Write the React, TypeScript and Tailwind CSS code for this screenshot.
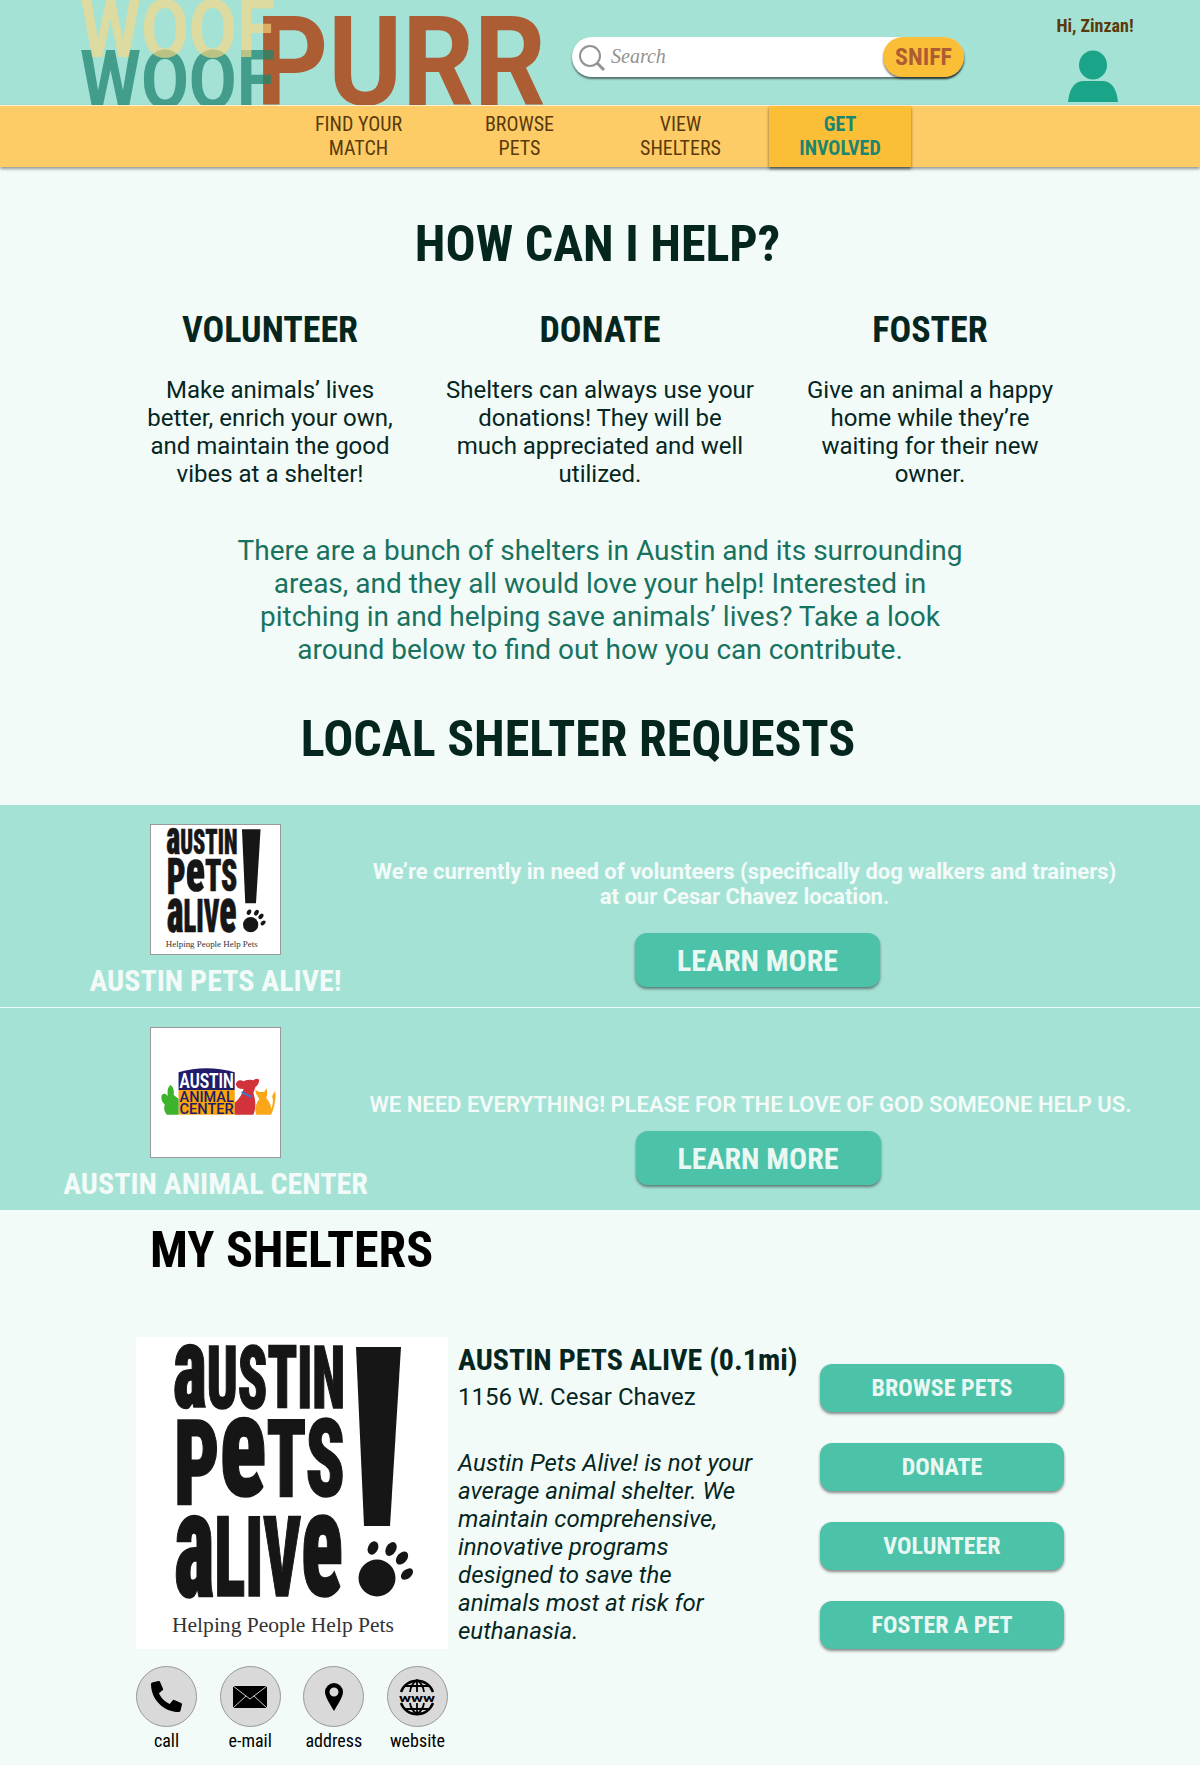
import React from "react";
import { FaPhoneAlt } from "react-icons/fa";

const cond = "[font-stretch:75%]";

const navItems = [
  ["FIND YOUR", "MATCH"],
  ["BROWSE", "PETS"],
  ["VIEW", "SHELTERS"],
];

const ways = [
  {
    title: "VOLUNTEER",
    lines: ["Make animals’ lives", "better, enrich your own,", "and maintain the good", "vibes at a shelter!"],
  },
  {
    title: "DONATE",
    lines: ["Shelters can always use your", "donations! They will be", "much appreciated and well", "utilized."],
  },
  {
    title: "FOSTER",
    lines: ["Give an animal a happy", "home while they’re", "waiting for their new", "owner."],
  },
];

const Logo: React.FC = () => (
  <svg width="464" height="105" viewBox="0 0 464 105" className="shrink-0 overflow-hidden">
    <g fontFamily="Roboto, sans-serif" fontWeight="700">
      <text x="176" y="105" fontSize="124" fill="#AC5D33" textLength="290" lengthAdjust="spacingAndGlyphs">PURR</text>
      <text x="0" y="108" fontSize="82" fill="#1D856E" fillOpacity="0.73" textLength="195" lengthAdjust="spacingAndGlyphs">WOOF</text>
      <text x="0" y="57" fontSize="82" fill="#FBD781" fillOpacity="0.65" textLength="195" lengthAdjust="spacingAndGlyphs">WOOF</text>
    </g>
  </svg>
);

const ApaLogo: React.FC<{ className?: string }> = ({ className }) => (
  <svg viewBox="0 0 312 312" className={className}>
    <rect width="312" height="312" fill="#fff" />
    <g fontFamily="Roboto, sans-serif" fontWeight="900" fontStretch="75%" fill="#161616" stroke="#161616" strokeWidth="1.5">
      <text x="37" y="71" textLength="172" lengthAdjust="spacingAndGlyphs">
        <tspan fontSize="117">a</tspan>
        <tspan fontSize="87">USTIN</tspan>
      </text>
      <text x="38" y="159" textLength="171" lengthAdjust="spacingAndGlyphs">
        <tspan fontSize="119" dy="9">P</tspan>
        <tspan fontSize="144" dy="-9">e</tspan>
        <tspan fontSize="107">TS</tspan>
      </text>
      <text x="38" y="259" textLength="169" lengthAdjust="spacingAndGlyphs">
        <tspan fontSize="151">a</tspan>
        <tspan fontSize="112">LIV</tspan>
        <tspan fontSize="151">e</tspan>
      </text>
    </g>
    <polygon points="220,10 265,10 254,189 228,189" fill="#161616" />
    <circle cx="241" cy="241" r="18.5" fill="#161616" />
    <ellipse cx="237" cy="211" rx="5" ry="7" transform="rotate(25 237 211)" fill="#161616" />
    <ellipse cx="255" cy="212" rx="5" ry="7.5" transform="rotate(30 255 212)" fill="#161616" />
    <ellipse cx="266" cy="221" rx="5" ry="7.5" transform="rotate(40 266 221)" fill="#161616" />
    <ellipse cx="271" cy="237" rx="4.5" ry="7" transform="rotate(50 271 237)" fill="#161616" />
    <text x="36" y="295" fontFamily="'Liberation Serif', serif" fontSize="20" fill="#333" textLength="222" lengthAdjust="spacingAndGlyphs">Helping People Help Pets</text>
  </svg>
);

const AacLogo: React.FC<{ className?: string }> = ({ className }) => (
  <svg viewBox="0 0 131 131" className={className}>
    <rect width="131" height="131" fill="#fff" />
    <path d="M28 45 Q56 37 85 45 V63 H28 Z" fill="#211B6B" />
    <rect x="28" y="63" width="57" height="25" fill="#FBA308" />
    <text x="29" y="61" fontFamily="Roboto, sans-serif" fontWeight="700" fontSize="20" fill="#fff" textLength="55" lengthAdjust="spacingAndGlyphs">AUSTIN</text>
    <g fontFamily="Roboto, sans-serif" fontWeight="500" fontSize="14" fill="#211B6B">
      <text x="29" y="75" textLength="55" lengthAdjust="spacingAndGlyphs">ANIMAL</text>
      <text x="29" y="87" textLength="55" lengthAdjust="spacingAndGlyphs">CENTER</text>
    </g>
    <path d="M28 88 H16 Q12 83 14 78 Q9 73 11 68 Q14 65 17 69 Q16 60 20 58 Q24 61 23 68 Q26 70 28 72 Z" fill="#3DB22B" />
    <path d="M85 88 V76 Q92 70 94 62 Q87 62 86 57 Q88 51 94 54 Q99 52 104 53 Q108 50 110 53 Q109 58 106 60 L104 66 Q106 72 106 78 Q106 84 104 88 Z" fill="#D2323A" />
    <path d="M92 65 L102 70" stroke="#2E7FD0" strokeWidth="2" />
    <path d="M107 88 Q104 80 110 72 Q106 67 106 63 L110 65 L115 65 L117 61 Q119 67 117 71 Q122 77 122 82 Q125 76 123 69 L126 64 Q128 74 122 88 Z" fill="#FBA518" />
  </svg>
);

const MailIcon: React.FC = () => (
  <svg viewBox="0 0 34 22" className="w-[34px] h-[22px]">
    <rect width="34" height="22" fill="#000" />
    <path d="M0 0 L17 13 L34 0 M0 22 L13 10 M34 22 L21 10" stroke="#fff" strokeWidth="0.8" fill="none" />
  </svg>
);

const PinIcon: React.FC = () => (
  <svg viewBox="0 0 18 28" className="w-[18px] h-[28px]">
    <path fillRule="evenodd" d="M9 0 a9 9 0 0 1 9 9 c0 5 -5 12 -9 19 c-4 -7 -9 -14 -9 -19 a9 9 0 0 1 9 -9 Z M9 4.5 a4.5 4.5 0 1 0 0 9 a4.5 4.5 0 1 0 0 -9 Z" fill="#000" />
  </svg>
);

const WebIcon: React.FC = () => (
  <svg viewBox="0 0 38 38" className="w-[38px] h-[38px]" fill="none" stroke="#000" strokeWidth="2">
    <path d="M3 14 A17 17 0 0 1 35 14 M3 25 A17 17 0 0 0 35 25" strokeWidth="2.4" />
    <path d="M19 2 V14 M19 25 V36 M12 14 Q13 6 19 2 Q25 6 26 14 M12 25 Q13 32 19 36 Q25 32 26 25 M6 8 H32 M6 31 H32" strokeWidth="1.8" />
    <text x="19" y="23.5" textAnchor="middle" fontFamily="Roboto, sans-serif" fontWeight="700" fontSize="11" fill="#000" stroke="none" textLength="36" lengthAdjust="spacingAndGlyphs">www</text>
  </svg>
);

const contacts = [
  { label: "call", icon: <FaPhoneAlt className="w-[31px] h-[31px] text-black" /> },
  { label: "e-mail", icon: <MailIcon /> },
  { label: "address", icon: <PinIcon /> },
  { label: "website", icon: <WebIcon /> },
];

const blurb = [
  "Austin Pets Alive! is not your",
  "average animal shelter. We",
  "maintain comprehensive,",
  "innovative programs",
  "designed to save the",
  "animals most at risk for",
  "euthanasia.",
];

const shelterButtons = ["BROWSE PETS", "DONATE", "VOLUNTEER", "FOSTER A PET"];

const LearnMore: React.FC = () => (
  <button className={`w-[245px] h-[54px] rounded-xl bg-[#4CC3A8] text-[#EAF8F4] text-[30px] font-bold shadow-[0_2px_3px_rgba(0,0,0,0.45)] ${cond}`}>
    LEARN MORE
  </button>
);

const App: React.FC = () => {
  return (
    <div className="w-[1200px] h-[1765px] overflow-hidden bg-[#F3FBF8] font-['Roboto',sans-serif]">
      {/* Header */}
      <header className="h-[105px] bg-[#A5E2D6] flex pl-[80px]">
        <Logo />
        <div className="ml-[28px] mt-[37px] w-[392px] h-[40px] flex items-center justify-between bg-white rounded-full shadow-[0_2px_2px_rgba(0,0,0,0.5)]">
          <div className="flex items-center">
            <svg viewBox="0 0 28 28" className="w-[28px] h-[28px] ml-[6px] mt-[2px]" fill="none" stroke="#929292" strokeWidth="2">
              <circle cx="12" cy="12" r="10" />
              <path d="M19 19 L26 26" strokeWidth="3" />
            </svg>
            <span className="ml-[5px] mb-[3px] text-[20px] italic text-[#929292] font-['Liberation_Serif',serif]">Search</span>
          </div>
          <button className={`w-[81px] h-[40px] rounded-full bg-[#FBBF37] text-[#AC5D33] text-[24px] font-bold shadow-[0_2px_2px_rgba(0,0,0,0.5)] ${cond}`}>
            SNIFF
          </button>
        </div>
        <div className="ml-[81px] w-[100px] flex flex-col items-center">
          <span className={`mt-[15px] text-[18px] leading-[22px] font-bold text-[#5A3A0A] ${cond}`}>Hi, Zinzan!</span>
          <svg viewBox="0 0 50 52" className="w-[50px] h-[52px] mt-[13px] mr-[4px]" fill="#1BA588">
            <ellipse cx="25" cy="15" rx="14" ry="14.5" />
            <path d="M0 52 Q2 31 16 31 H34 Q48 31 50 52 Z" />
          </svg>
        </div>
      </header>

      {/* Nav */}
      <nav className="relative h-[62px] bg-[#FDCC67] border-t border-white/70 shadow-[0_2px_3px_rgba(0,0,0,0.4)] flex pl-[278px]">
        {navItems.map((item) => (
          <div key={item[0]} className={`w-[161px] pt-[6px] text-center text-[20px] leading-[24px] text-[#5A3A0A] ${cond}`}>
            {item[0]}
            <br />
            {item[1]}
          </div>
        ))}
        <div className={`ml-[8px] w-[142px] h-[61px] pt-[6px] text-center text-[20px] leading-[24px] font-bold text-[#1A8570] bg-[#FBBF37] shadow-[0_2px_3px_rgba(0,0,0,0.5)] ${cond}`}>
          GET
          <br />
          INVOLVED
        </div>
      </nav>

      {/* How can I help */}
      <section className="flex flex-col items-center">
        <h1 className={`mt-[48px] mr-[5px] text-[50px] leading-[58px] font-bold text-[#05261F] ${cond}`}>HOW CAN I HELP?</h1>
        <div className="mt-[36px] w-[990px] grid grid-cols-3 text-center">
          {ways.map((w) => (
            <div key={w.title}>
              <h2 className={`text-[36px] leading-[42px] font-bold text-[#05261F] ${cond}`}>{w.title}</h2>
              <p className="mt-[25px] text-[24px] leading-[28px] text-[#05261F]">
                {w.lines.map((l) => (
                  <span key={l} className="block">{l}</span>
                ))}
              </p>
            </div>
          ))}
        </div>
        <p className="mt-[46px] text-center text-[28px] leading-[33px] text-[#187260]">
          There are a bunch of shelters in Austin and its surrounding
          <br />
          areas, and they all would love your help! Interested in
          <br />
          pitching in and helping save animals’ lives? Take a look
          <br />
          around below to find out how you can contribute.
        </p>
        <h1 className={`mt-[44px] mr-[44px] text-[50px] leading-[58px] font-bold text-[#05261F] ${cond}`}>LOCAL SHELTER REQUESTS</h1>
      </section>

      {/* Requests */}
      <section className="mt-[37px] bg-[#A5E2D6]">
        <div className="h-[203px] flex border-b border-white/80">
          <div className="w-[431px] flex flex-col items-center pt-[19px]">
            <div className="w-[131px] h-[131px] border border-[#999]">
              <ApaLogo className="w-full h-full" />
            </div>
            <div className={`mt-[8px] text-[30px] leading-[36px] font-bold text-[#F3FBF8] ${cond}`}>AUSTIN PETS ALIVE!</div>
          </div>
          <div className="w-[627px] flex flex-col items-center pt-[54px]">
            <p className="text-center text-[22px] leading-[25px] font-bold text-[#F3FBF8] whitespace-nowrap">
              We’re currently in need of volunteers (specifically dog walkers and trainers)
              <br />
              at our Cesar Chavez location.
            </p>
            <div className="mt-[24px] ml-[26px]"><LearnMore /></div>
          </div>
        </div>
        <div className="h-[202px] flex">
          <div className="w-[431px] flex flex-col items-center pt-[19px]">
            <div className="w-[131px] h-[131px] border border-[#999]">
              <AacLogo className="w-full h-full" />
            </div>
            <div className={`mt-[8px] text-[30px] leading-[36px] font-bold text-[#F3FBF8] ${cond}`}>AUSTIN ANIMAL CENTER</div>
          </div>
          <div className="w-[627px] ml-[6px] flex flex-col items-center pt-[84px]">
            <p className="text-center text-[22px] leading-[25px] font-semibold text-[#F3FBF8] whitespace-nowrap">
              WE NEED EVERYTHING! PLEASE FOR THE LOVE OF GOD SOMEONE HELP US.
            </p>
            <div className="mt-[14px] ml-[15px]"><LearnMore /></div>
          </div>
        </div>
      </section>

      {/* My shelters */}
      <section className="pl-[136px]">
        <h1 className={`pl-[14px] pt-[11px] text-[50px] leading-[58px] font-bold text-black ${cond}`}>MY SHELTERS</h1>
        <div className="mt-[58px] flex">
          <div className="w-[312px]">
            <ApaLogo className="w-[312px] h-[312px]" />
            <div className="mt-[17px] flex justify-between">
              {contacts.map((c) => (
                <div key={c.label} className="w-[61px] flex flex-col items-center">
                  <div className="w-[61px] h-[61px] rounded-full bg-[#D9D9D9] border border-[#999] flex items-center justify-center">
                    {c.icon}
                  </div>
                  <span className={`mt-[4px] text-[18px] leading-[20px] text-black whitespace-nowrap ${cond}`}>{c.label}</span>
                </div>
              ))}
            </div>
          </div>
          <div className="ml-[10px] w-[352px]">
            <h2 className={`text-[30px] leading-[46px] font-bold text-[#05261F] whitespace-nowrap ${cond}`}>AUSTIN PETS ALIVE (0.1mi)</h2>
            <div className="text-[24px] leading-[28px] text-[#05261F]">1156 W. Cesar Chavez</div>
            <p className="mt-[38px] text-[24px] leading-[28px] italic text-[#05261F]">
              {blurb.map((l) => (
                <span key={l} className="block whitespace-nowrap">{l}</span>
              ))}
            </p>
          </div>
          <div className="pt-[27px] ml-[10px] flex flex-col gap-[31px]">
            {shelterButtons.map((b) => (
              <button key={b} className={`w-[244px] h-[48px] rounded-xl bg-[#4CC3A8] text-[#EAF8F4] text-[24px] font-bold shadow-[0_2px_3px_rgba(0,0,0,0.45)] ${cond}`}>
                {b}
              </button>
            ))}
          </div>
        </div>
      </section>
    </div>
  );
};

export default App;
